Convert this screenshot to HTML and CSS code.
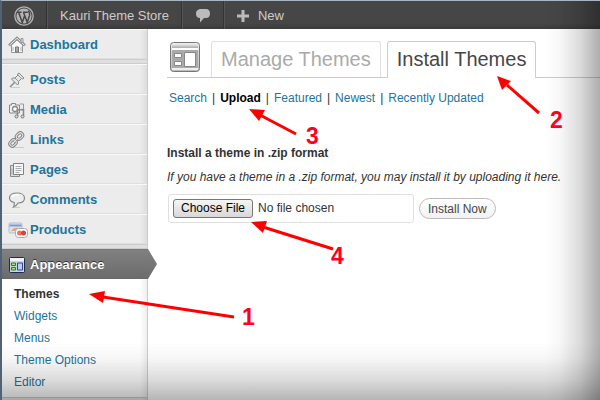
FILE: index.html
```html
<!DOCTYPE html>
<html lang="en">
<head>
<meta charset="utf-8">
<title>Install Themes</title>
<link rel="stylesheet" href="styles.css">
</head>
<body>
<div class="screen">
  <header class="adminbar">
    <a class="bar-item bar-logo" href="#" aria-label="WordPress">
      <svg width="20" height="20" viewBox="0 0 20 20"><circle cx="10" cy="10" r="9.2" fill="none" stroke="#b4b4b4" stroke-width="1.3"/><circle cx="10" cy="10" r="7.6" fill="#b4b4b4"/><path d="M3 6.2h4.6M9 6.2h4.8M4.7 6.4l3.6 10L10.5 10M9.6 6.4l3.6 10 2.4-7.2c.6-2-.9-2.600-1-4.600" fill="none" stroke="#464646" stroke-width="1.5"/></svg>
    </a>
    <a class="bar-item bar-site" href="#">Kauri Theme Store</a>
    <a class="bar-item bar-comments" href="#" aria-label="Comments"><svg width="16" height="14" viewBox="0 0 16 14"><path d="M6 0h5c2.500 0 4 1.500 4 4.500S13.500 9 11 9h-2L5 13.500V9C2.500 9 1 7.500 1 4.500S3.500 0 6 0z" fill="#bbb"/></svg></a>
    <a class="bar-item bar-new" href="#"><svg width="12" height="12" viewBox="0 0 12 12"><path d="M4.500 0h3v4.500H12v3H7.500V12h-3V7.500H0v-3h4.500z" fill="#bbb"/></svg>New</a>
  </header>
  <div class="columns">
    <nav class="sidebar">
      <a class="menu-item" href="#"><svg viewBox="0 0 18 18"><path d="M3.500 9v7.500h11V9L9 4z" fill="#fafafa" stroke="#999"/><path d="M1 9.500L9 2l8 7.500" fill="none" stroke="#8c8c8c" stroke-width="2.600"/><path d="M1.500 9.300L9 2.300l7.500 7" fill="none" stroke="#eee" stroke-width="1"/><path d="M13 2.500h2v4h-2z" fill="#ddd" stroke="#999"/><path d="M7.500 16v-5h3v5z" fill="#aaa" stroke="#777"/><path d="M5 11v4M13 11v4" stroke="#aaa"/></svg>Dashboard</a>
      <div class="separator"></div>
      <a class="menu-item" href="#"><svg viewBox="0 0 18 18"><path d="M2 16l5-5" stroke="#888" stroke-width="1.500"/><path d="M3 16.500h9" stroke="#ccc"/><path d="M11 2l5 5-1.500 1-1-.5-3 3v2.500l-1 1-6-6 1-1H7l3-3-.5-1z" fill="#e5e5e5" stroke="#888" stroke-linejoin="round"/><path d="M7 7l4 4M10 4l4 4" stroke="#999"/></svg>Posts</a>
      <a class="menu-item" href="#"><svg viewBox="0 0 18 18"><path d="M1.500 4h2V2.500h4V4h4v8h-10z" fill="#eee" stroke="#888"/><circle cx="7" cy="8" r="2.500" fill="#fff" stroke="#888" stroke-width="1.300"/><path d="M12 3h3.500v5" fill="none" stroke="#999"/><path d="M9.500 15V9l6-.5V15" fill="none" stroke="#888" stroke-width="1.500"/><circle cx="8.500" cy="15.500" r="1.500" fill="#ddd" stroke="#777"/><circle cx="14.500" cy="15.500" r="1.500" fill="#ddd" stroke="#777"/></svg>Media</a>
      <a class="menu-item" href="#"><svg viewBox="0 0 18 18"><path d="M3 16.500h13" stroke="#ccc"/><g fill="none" stroke="#808080" stroke-width="3"><rect x="8" y="2.500" width="7" height="5" rx="2.500" transform="rotate(-45 11.500 5)"/><rect x="1.500" y="9.500" width="7" height="5" rx="2.500" transform="rotate(-45 5 12)"/><path d="M6 11l4.500-4.500"/></g><g fill="none" stroke="#e6e6e6"><rect x="8" y="2.500" width="7" height="5" rx="2.500" transform="rotate(-45 11.500 5)"/><rect x="1.500" y="9.500" width="7" height="5" rx="2.500" transform="rotate(-45 5 12)"/><path d="M6 11l4.500-4.500"/></g></svg>Links</a>
      <a class="menu-item" href="#"><svg viewBox="0 0 18 18"><path d="M2.500 4.500h9v11h-9z" fill="#ddd" stroke="#888"/><path d="M5.500 2.500h10v11h-10z" fill="#f8f8f8" stroke="#808080"/><path d="M7.500 5.500h6M7.500 7.500h6M7.500 9.500h6M7.500 11.500h4M4 7.500v6" stroke="#aaa"/></svg>Pages</a>
      <a class="menu-item" href="#"><svg viewBox="0 0 18 18"><path d="M4 16.500h8" stroke="#ccc"/><path d="M9 2c4.500 0 7.500 2 7.500 5S14 12 10 12c-1 2-2.500 3.500-4.500 4 .8-1.500 1-3 .8-4.500C3.500 11 1.500 9.500 1.500 7c0-3 3-5 7.500-5z" fill="#eee" stroke="#888" stroke-width="1.200"/><path d="M4 6c1-2 4-2.500 7-2" fill="none" stroke="#fff" stroke-width="1.500"/></svg>Comments</a>
      <a class="menu-item" href="#"><svg class="wide" viewBox="0 0 21 18"><rect x="1" y="2" width="13" height="10" rx="1" fill="#d9e2f3" stroke="#b3bdd0"/><path d="M1.500 4.500h12" stroke="#7e9dcd" stroke-width="2"/><path d="M3 10c2-3 4-4 8-3v3z" fill="#e7a56a"/><rect x="7.500" y="7.500" width="12" height="9" rx="3" fill="#fff" stroke="#aaa"/><circle cx="11.500" cy="12" r="2.500" fill="#f07455"/><circle cx="15.500" cy="12" r="2.500" fill="#d84238"/></svg>Products</a>
      <div class="separator"></div>
      <a class="menu-item current" href="#"><svg viewBox="0 0 18 18"><rect x="1.500" y="1.500" width="15" height="15" rx="1" fill="#b9dcdf" stroke="#1d2b4c"/><path d="M2 2h14v3H2z" fill="#eef2fa"/><path d="M3.500 7h4v2.500h-4zM3.500 11.500h4V14h-4z" fill="#b8dc7c" stroke="#486b35"/><path d="M9.500 7h5v7h-5z" fill="#c3c9f7" stroke="#3b438f"/></svg>Appearance</a>
      <div class="submenu">
        <a class="active" href="#">Themes</a>
        <a href="#">Widgets</a>
        <a href="#">Menus</a>
        <a href="#">Theme Options</a>
        <a href="#">Editor</a>
      </div>
    </nav>
    <main class="content">
      <div class="tabs">
        <svg class="page-icon" width="32" height="32" viewBox="0 0 32 32"><defs><linearGradient id="frame" x2="0" y2="1"><stop offset="0" stop-color="#eee"/><stop offset="1" stop-color="#bbb"/></linearGradient><linearGradient id="title" x2="0" y2="1"><stop offset="0" stop-color="#eee"/><stop offset="1" stop-color="#aaa"/></linearGradient></defs><rect x="1.500" y="1.500" width="29" height="29" rx="3" fill="url(#frame)" stroke="#777"/><path d="M3 3h26v4H3z" fill="url(#title)"/><path d="M3 7h26v2H3z" fill="#fff"/><path d="M3 9h26v18H3z" fill="#aaa"/><path d="M3 27h26v2H3z" fill="#eee"/><path d="M5.500 12.500h7v4h-7zM5.500 20.500h7v4h-7zM15.500 11.500h11v14h-11z" fill="#fff" stroke="#888"/></svg>
        <a class="tab" href="#">Manage Themes</a>
        <a class="tab tab-active" href="#">Install Themes</a>
      </div>
      <div class="filters">
        <a href="#">Search</a><span>|</span><a class="selected" href="#">Upload</a><span>|</span><a href="#">Featured</a><span>|</span><a href="#">Newest</a><span>|</span><a href="#">Recently Updated</a>
      </div>
      <h4>Install a theme in .zip format</h4>
      <p>If you have a theme in a .zip format, you may install it by uploading it here.</p>
      <form class="upload">
        <input type="file" aria-label="Theme zip file">
        <button type="button">Install Now</button>
      </form>
    </main>
  </div>
  <div class="shade"></div>
  <svg class="arrows" width="600" height="400" viewBox="0 0 600 400">
    <g stroke="#f00" stroke-width="3"><path d="M103 297L234 317"/><path d="M507 85l32 28"/><path d="M260 115l36 19"/><path d="M263 227l70 22"/></g>
    <g fill="#f00"><path d="M89 294l16-3-2 12z"/><path d="M497 76l14 5-9 9z"/><path d="M249 109l16 1-6 11z"/><path d="M251 222l16-1-4 12z"/></g>
  </svg>
  <span class="num n1">1</span><span class="num n2">2</span><span class="num n3">3</span><span class="num n4">4</span>
</div>
</body>
</html>
```
FILE: styles.css
```css
* { box-sizing: border-box; }
body {
  margin: 0;
  font: 12px/16px "Liberation Sans", Arial, sans-serif;
  color: #333;
  background: #fff;
}
a { color: #21759b; text-decoration: none; }
.screen {
  position: relative;
  display: flex;
  flex-direction: column;
  min-height: 100vh;
  overflow: hidden;
  border-top: 1px solid #a9b5bf;
  border-left: 2px solid #52617a;
}
.adminbar {
  display: flex;
  height: 28px;
  background: linear-gradient(#464646 80%, #3a3a3a);
}
.bar-item {
  display: flex;
  align-items: center;
  padding: 2px 12px 0;
  color: #ccc;
  font-size: 13px;
  border-right: 1px solid #333;
  border-left: 1px solid #555;
}
.bar-logo { border-left: 0; }
.bar-new { gap: 9px; border-right: 0; }
.columns { display: flex; flex: 1; }
.sidebar {
  flex: 0 0 146px;
  border-right: 1px solid #ccc;
  background: linear-gradient(90deg, #ececec 138px, #ddd);
}
.menu-item {
  display: flex;
  align-items: center;
  gap: 4px;
  height: 30px;
  padding: 2px 0 0 6px;
  border-top: 1px solid #f9f9f9;
  border-bottom: 1px solid #dfdfdf;
  font-size: 13px;
  font-weight: bold;
}
.menu-item svg { width: 18px; height: 18px; }
.menu-item .wide { width: 21px; margin-right: -3px; }
.separator { height: 5px; background: #dfdfdf; border-top: 1px solid #ccc; border-bottom: 1px solid #ccc; }
.current {
  position: relative;
  margin-right: -1px;
  color: #fff;
  border-color: #777 transparent #6a6a6a;
  background: linear-gradient(#808080, #6c6c6c);
  text-shadow: 0 -1px 0 #333;
}
.current::after {
  content: "";
  position: absolute;
  left: 100%;
  top: -1px;
  width: 9px;
  height: 30px;
  background: linear-gradient(#808080, #6c6c6c);
  clip-path: polygon(0 0, 100% 50%, 0 100%);
}
.submenu {
  display: flex;
  flex-direction: column;
  padding: 4px 0 4px 12px;
  border-bottom: 1px solid #ccc;
  background: linear-gradient(90deg, #fff 138px, #eee);
}
.submenu a { line-height: 22px; }
.submenu .active { color: #333; font-weight: bold; }
.content { flex: 1; min-width: 0; padding: 12px 0 0 19px; }
.tabs {
  display: flex;
  align-items: flex-end;
  height: 37px;
  border-bottom: 1px solid #ccc;
}
.page-icon { align-self: flex-start; margin: 0 10px 0 2px; }
.tab {
  height: 36px;
  margin-right: 6px;
  padding: 0 9px;
  border: 1px solid #dfdfdf;
  border-bottom: 0;
  border-radius: 3px 3px 0 0;
  color: #aaa;
  font-size: 20px;
  line-height: 34px;
}
.tab-active { height: 37px; margin-bottom: -1px; border-color: #ccc; background: #fff; color: #464646; }
.filters { display: flex; gap: 5px; padding: 12px 0 0 2px; }
.filters .selected { color: #000; font-weight: bold; }
h4 { margin: 39px 0 8px; font-size: 12px; line-height: 16px; }
p { margin: 0 0 9px; font-style: italic; }
.upload { display: flex; align-items: center; gap: 5px; }
.upload input {
  width: 246px;
  height: 29px;
  margin-left: 1px;
  padding: 4px;
  border: 1px solid #dfdfdf;
  border-radius: 3px;
  font: 12px/19px "Liberation Sans", Arial, sans-serif;
}
.upload input::file-selector-button {
  height: 19px;
  margin: 0 5px 0 0;
  padding: 0 7px;
  border: 1px solid #777;
  border-radius: 3px;
  background: linear-gradient(#f5f5f5, #d8d8d8);
  color: #000;
  font: 12px/17px "Liberation Sans", Arial, sans-serif;
}
.upload button {
  height: 21px;
  padding: 0 8px;
  border: 1px solid #bbb;
  border-radius: 11px;
  background: linear-gradient(#fff, #f2f2f2);
  color: #464646;
  font: 12px/16px "Liberation Sans", Arial, sans-serif;
}
.shade {
  position: absolute;
  inset: 0;
  pointer-events: none;
  background:
    linear-gradient(270deg, rgba(0,0,0,.32), rgba(0,0,0,.14) 20px, rgba(0,0,0,.03) 40px, transparent 55px),
    linear-gradient(0deg, rgba(0,0,0,.29), rgba(0,0,0,.14) 20px, rgba(0,0,0,.03) 42px, transparent 58px);
}
.arrows { position: absolute; left: -2px; top: -1px; pointer-events: none; }
.num { position: absolute; color: #ff0024; font-size: 23px; font-weight: bold; line-height: 16px; }
.n1 { left: 240px; top: 308px; }
.n2 { left: 548px; top: 111px; }
.n3 { left: 304px; top: 127px; }
.n4 { left: 329px; top: 247px; }
```
